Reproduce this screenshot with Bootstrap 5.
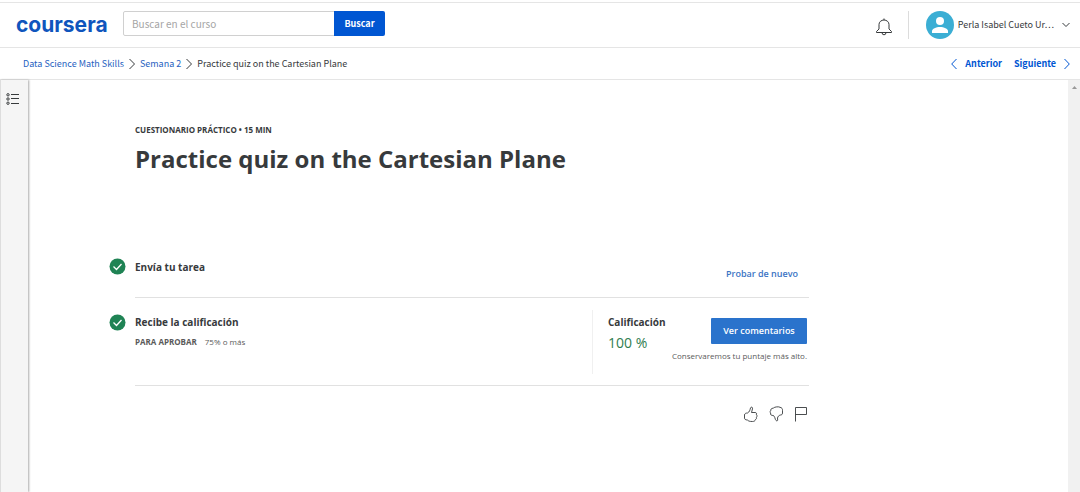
<!DOCTYPE html>
<html lang="es">
<head>
<meta charset="utf-8">
<meta name="viewport" content="width=device-width, initial-scale=1">
<title>Practice quiz on the Cartesian Plane | Coursera</title>
<link href="https://cdn.jsdelivr.net/npm/bootstrap@5.3.0/dist/css/bootstrap.min.css" rel="stylesheet">
<style>
  body { font-family: "Open Sans", sans-serif; font-size: 9px; line-height: 16px; color: #373a3c; }
  a { text-decoration: none; color: #0056d2; }
  svg { display: block; flex: none; fill: none; stroke: #373a3c; stroke-width: 1; }
  .top-bar, .crumb-bar { font-family: "Noto Sans CJK SC", sans-serif; border-bottom: 1px solid #e5e5e5; }
  .top-bar { border-top: 1px solid #e5e5e5; margin-top: 2px; height: 46px; padding: 0 10px 0 16px; }
  .brand { font: 700 21px/24px Inter, sans-serif; color: #0f55bd; width: 107px; }
  .search-form { width: 262px; margin-bottom: 3px; }
  .search-form .form-control { height: 25px; font-size: 10px; padding: 0 8px; border: 1px solid #d0d0d0; border-radius: 2px 0 0 2px; }
  .search-form .form-control::placeholder { color: #a5a5a5; }
  .search-form .btn { width: 51px; height: 25px; padding: 0; font-size: 9px; font-weight: 700; background: #0056d2; color: #fff; border: 0; border-radius: 0 2px 2px 0; }
  .user-button { background: none; border: 0; border-left: 1px solid #dcdcdc; height: 28px; padding: 0 0 0 17px; color: #373a3c; }
  .plain-button { background: none; border: 0; padding: 0; }
  .crumb-bar { height: 32px; padding: 0 10px 0 23px; }
  .crumb-bar a { color: #1f5fbf; }
  .crumb-bar .pager { color: #0056d2; font-weight: 700; }
  .crumb-bar .pager svg { stroke: #0056d2; }
  .side-rail { width: 28px; background: #f5f5f5; border-left: 1px solid #ddd; box-shadow: 1px 0 2px #aaa; padding: 13px 0 0 5px; }
  .scroll-rail { width: 12px; background: #f1f1f1; padding: 6px 0 0 4px; }
  .quiz { width: 100%; max-width: 781px; padding: 42px 0 0 107px; }
  .kicker { font-size: 8px; font-weight: 700; }
  .quiz h1 { font-size: 24px; line-height: 32px; font-weight: 700; margin: 5px 0 0; }
  .steps { margin-top: 64px; }
  .step { position: relative; border-bottom: 1px solid #e1e1e1; }
  .step h2 { font-size: 10px; line-height: 16px; font-weight: 700; margin: 0; }
  .step-mark { position: absolute; left: -26px; }
  .step-submit { height: 59px; padding: 20px 11px 0 0; }
  .step-grade { height: 88px; padding-top: 12px; }
  .step-submit .step-mark { top: 19px; }
  .step-grade .step-mark { top: 16px; }
  .retry { color: #3a73c4; font-weight: 600; padding-top: 7px; }
  .pass { font-size: 8px; color: #5a5a5a; margin-top: 4px; }
  .grade { width: 217px; height: 64px; border-left: 1px solid #f0f0f0; padding: 0 2px 0 15px; }
  .grade-label { width: 40px; }
  .score { font-size: 14px; line-height: 20px; color: #2f7d50; margin-top: 3px; }
  .comments { width: 96px; height: 26px; padding: 0; border: 0; border-radius: 1px; background: #2a73cc; color: #fff; font-weight: 600; }
  .note { font-size: 8px; color: #5a5a5a; margin-top: 4px; }
  .feedback { gap: 11px; padding: 20px 2px 0 0; }
  .feedback svg { stroke-width: .9; }
</style>
</head>
<body class="bg-white">
<div class="d-flex flex-column vh-100 overflow-hidden">
  <header class="top-bar d-flex align-items-center flex-shrink-0">
    <a class="brand" href="#">coursera</a>
    <form class="search-form input-group flex-nowrap" role="search">
      <input class="form-control" type="search" placeholder="Buscar en el curso" aria-label="Buscar en el curso">
      <button class="btn" type="button">Buscar</button>
    </form>
    <button class="plain-button ms-auto me-3 pt-1" type="button" aria-label="Notificaciones">
      <svg width="16" height="18" viewBox="0 0 16 18"><path d="M.5 14.500h15M.5 14.500v-1l2.500-2.500V6.500a5 4.500 0 0 1 10 0V11l2.500 2.500v1M8 2V.5M6 14.500a2 2.300 0 0 0 4 0"/></svg>
    </button>
    <button class="user-button d-flex align-items-center" type="button">
      <svg class="me-1" width="28" height="28" viewBox="0 0 28 28"><g stroke="none"><circle cx="14" cy="14" r="14" fill="#3baed4"/><circle cx="14" cy="10" r="4" fill="#fff"/><path fill="#fff" d="M6 22v-2c0-2 4-4 8-4s8 2 8 4v2z"/></g></svg>
      <span>Perla Isabel Cueto Ur…</span>
      <svg class="ms-2" width="8" height="6" viewBox="0 0 8 6"><path d="M.5 1 4 4.500 7.500 1"/></svg>
    </button>
  </header>

  <nav class="crumb-bar d-flex align-items-center flex-shrink-0" aria-label="Ruta">
    <a href="#">Data Science Math Skills</a>
    <svg class="mx-1" width="8" height="12" viewBox="0 0 8 12"><path d="m1.500 1 5 5-5 5"/></svg>
    <a href="#">Semana 2</a>
    <svg class="mx-1" width="8" height="12" viewBox="0 0 8 12"><path d="m1.500 1 5 5-5 5"/></svg>
    <span>Practice quiz on the Cartesian Plane</span>
    <a class="pager d-flex align-items-center gap-2 ms-auto" href="#"><svg width="6" height="12" viewBox="0 0 6 12"><path d="M5.500 1 .7 6l4.800 5"/></svg>Anterior</a>
    <a class="pager d-flex align-items-center gap-2 ms-2 ps-1" href="#">Siguiente<svg width="6" height="12" viewBox="0 0 6 12"><path d="m.5 1 4.800 5-4.800 5"/></svg></a>
  </nav>

  <div class="d-flex flex-grow-1">
    <aside class="side-rail flex-shrink-0">
      <button class="plain-button" type="button" aria-label="Abrir menú del curso">
        <svg width="13" height="12" viewBox="0 0 13 12"><circle cx="2" cy="1.800" r="1.200"/><circle cx="2" cy="6" r="1.200"/><circle cx="2" cy="10.200" r="1.200"/><path d="M5 1.500h8M5 5.500h8M5 10.500h8"/></svg>
      </button>
    </aside>
    <main class="flex-grow-1">
      <div class="quiz">
        <div class="kicker">CUESTIONARIO PRÁCTICO • 15 MIN</div>
        <h1>Practice quiz on the Cartesian Plane</h1>
        <div class="steps">
          <section class="step step-submit d-flex justify-content-between align-items-start">
            <svg class="step-mark" width="17" height="17" viewBox="0 0 17 17"><circle cx="8.500" cy="8.500" r="8" fill="#1f8354" stroke="none"/><path d="m4.500 8.500 3 3 5-5.500" stroke="#fff" stroke-width="1.300"/></svg>
            <h2>Envía tu tarea</h2>
            <a class="retry" href="#">Probar de nuevo</a>
          </section>
          <section class="step step-grade d-flex justify-content-between align-items-start">
            <svg class="step-mark" width="17" height="17" viewBox="0 0 17 17"><circle cx="8.500" cy="8.500" r="8" fill="#1f8354" stroke="none"/><path d="m4.500 8.500 3 3 5-5.500" stroke="#fff" stroke-width="1.300"/></svg>
            <div class="pt-1">
              <h2>Recibe la calificación</h2>
              <div class="pass"><b>PARA APROBAR</b><span class="ms-2">75% o más</span></div>
            </div>
            <div class="grade d-flex justify-content-between">
              <div class="grade-label pt-1 text-nowrap">
                <h2>Calificación</h2>
                <div class="score">100 %</div>
              </div>
              <div class="d-flex flex-column align-items-end pt-2 flex-shrink-0">
                <button class="comments" type="button">Ver comentarios</button>
                <span class="note">Conservaremos tu puntaje más alto.</span>
              </div>
            </div>
          </section>
        </div>
        <div class="feedback d-flex justify-content-end">
          <button class="plain-button" type="button" aria-label="Me gusta"><svg width="15" height="16" viewBox="0 0 15 16"><path d="M1.500 9c0-1.500 1.500-2 3-2 2-1 2.500-3 3-5 .5-1.500 2.500-1 2 .8L8.500 6.500H12c1.500 0 2 1.200 1.400 2.300 1 .8.800 2-.1 2.500.5 1.200 0 2-.9 2.300-.3 1.400-1.400 1.900-3 1.900-3 0-4-.5-5-1.500-2 0-2.900-.8-2.900-2z"/></svg></button>
          <button class="plain-button" type="button" aria-label="No me gusta"><svg width="15" height="16" viewBox="0 0 15 16"><path d="M4.500 2C5.500.8 10 .4 11 1.300c2 .3 2.600 1.700 2.500 3V7c0 1.500-1 2-2 2-2 .5-2.500 1.500-3 3l.2 2.200c-.5 1.200-1.700.6-2.200-.5C6 12 5.500 10.500 4.500 9.500c-2 0-3.500-.5-2.800-2.500-.9-.8-.6-1.700 0-2.200C1.500 3.500 2 2.500 4.500 2z"/></svg></button>
          <button class="plain-button" type="button" aria-label="Informar de un problema"><svg width="12" height="16" viewBox="0 0 12 16"><path d="M.5 15.500V1.500h11v7H.5"/></svg></button>
        </div>
      </div>
    </main>
    <div class="scroll-rail flex-shrink-0" aria-hidden="true"><svg width="5" height="4" viewBox="0 0 5 4"><path d="M0 3h5L2.500 0z" fill="#999" stroke="none"/></svg></div>
  </div>
</div>
<script src="https://cdn.jsdelivr.net/npm/bootstrap@5.3.0/dist/js/bootstrap.bundle.min.js"></script>
</body>
</html>
